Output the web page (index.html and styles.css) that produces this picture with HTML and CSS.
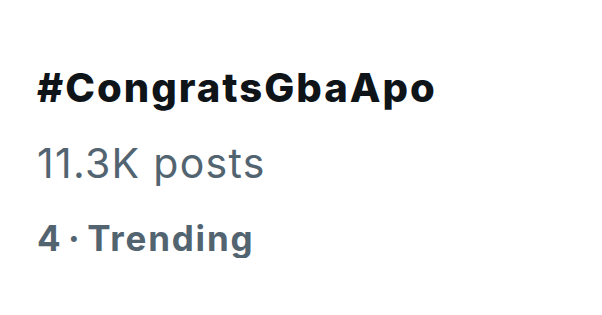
FILE: index.html
```html
<!DOCTYPE html>
<html lang="en">
<head>
    <meta charset="UTF-8">
    <title>Trend</title>
    <link rel="stylesheet" href="styles.css">
</head>
<body>
    <div class="trend">
        <div class="tag">#CongratsGbaApo</div>
        <div class="count">11.3K posts</div>
        <div class="rank">4 · Trending</div>
    </div>
</body>
</html>
```

FILE: styles.css
```css
body {
    margin: 0;
    background: #fff;
    font-family: Inter, "Noto Sans", sans-serif;
}
.trend {
    padding: 64px 0 0 37px;
    display: flex;
    flex-direction: column;
}
.tag {
    font-size: 40px;
    font-weight: 800;
    color: #0f1419;
    line-height: 48px;
    letter-spacing: 2px;
}
.count {
    margin-top: 27px;
    font-size: 41px;
    color: #536471;
    line-height: 48px;
    letter-spacing: 1.3px;
}
.rank {
    margin-top: 31px;
    font-size: 35px;
    font-weight: 700;
    color: #536471;
    line-height: 40px;
    letter-spacing: 1.8px;
    word-spacing: -4.5px;
}
```
